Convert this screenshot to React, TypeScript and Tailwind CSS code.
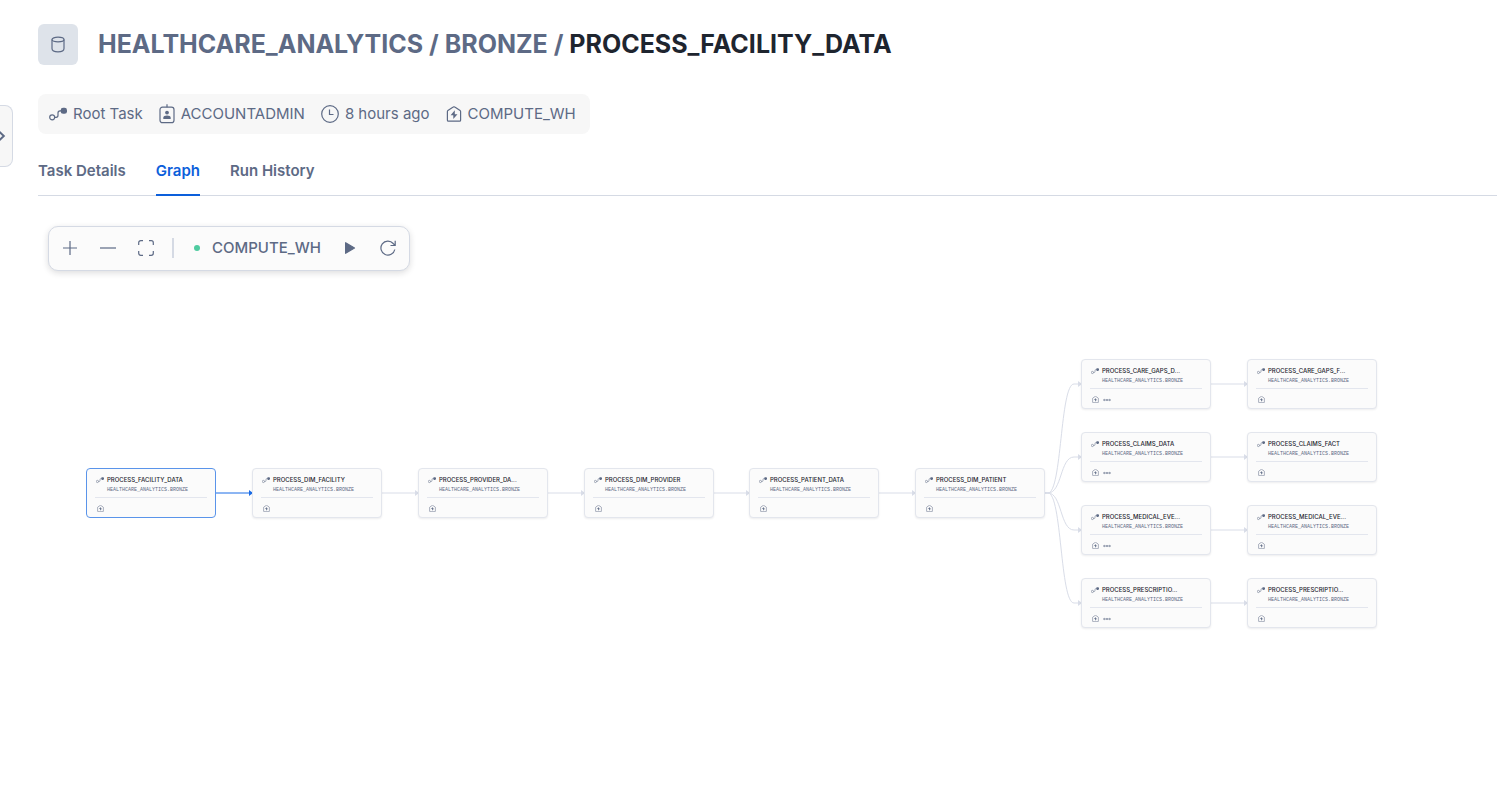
import React from 'react';

type IconProps = { className?: string };

function TaskIcon({ className }: IconProps) {
  return (
    <svg viewBox="0 0 18 18" fill="none" stroke="currentColor" strokeWidth="1.200" className={className} aria-hidden="true">
      <circle cx="3.200" cy="12.300" r="2.500" />
      <path d="M5.700 12.300h1.500c1.400 0 1.800-.8 1.800-2V8c0-1.300.6-2.200 2-2.200h1" />
      <rect x="11.700" y="2.800" width="6.300" height="6" rx="2.400" fill="currentColor" stroke="none" />
    </svg>
  );
}

function BadgeIcon({ className }: IconProps) {
  return (
    <svg viewBox="0 0 16 20" fill="none" stroke="currentColor" strokeWidth="1.200" className={className} aria-hidden="true">
      <rect x="1" y="3.200" width="14" height="15.500" rx="2.500" />
      <path d="M8 .3v3" />
      <circle cx="8" cy="8.600" r="1.900" fill="currentColor" stroke="none" />
      <path d="M4.300 15v-1.200c0-1.500 1.500-2.300 3.700-2.300s3.700.8 3.700 2.300V15z" fill="currentColor" stroke="none" />
    </svg>
  );
}

function ClockIcon({ className }: IconProps) {
  return (
    <svg viewBox="0 0 18 18" fill="none" stroke="currentColor" strokeWidth="1.200" className={className} aria-hidden="true">
      <circle cx="9" cy="9" r="8.300" />
      <path d="M8.500 4.500v5h4" />
    </svg>
  );
}

function WarehouseIcon({ className }: IconProps) {
  return (
    <svg viewBox="0 0 16 16" fill="none" stroke="currentColor" strokeWidth="1.200" className={className} aria-hidden="true">
      <path d="M2.400 15.200h11.200c.6 0 1-.4 1-1V5.600c0-.4-.2-.8-.5-1L8.800 1.100a1.400 1.400 0 0 0-1.600 0L1.900 4.600c-.3.200-.5.600-.5 1v8.600c0 .6.400 1 1 1z" />
      <path d="M8.800 4.300 4.600 9.200h2.700v3.900l4.200-4.900H8.800z" fill="currentColor" stroke="none" />
    </svg>
  );
}

function DatabaseIcon({ className }: IconProps) {
  return (
    <svg viewBox="0 0 16 18" fill="none" stroke="currentColor" strokeWidth="1.200" className={className} aria-hidden="true">
      <ellipse cx="8" cy="3.500" rx="6" ry="2.300" />
      <path d="M2 3.500v9c0 2 1.600 3.300 6 3.300s6-1.300 6-3.300v-9" />
    </svg>
  );
}

const icons = {
  plus: <path d="M8 1v14M1 8h14" />,
  minus: <path d="M0 8h16" />,
  expand: <path d="M.7 5V2.700a2 2 0 0 1 2-2H5M11 .7h2.300a2 2 0 0 1 2 2V5M15.300 11v2.300a2 2 0 0 1-2 2H11M5 15.300H2.700a2 2 0 0 1-2-2V11" />,
  play: <path d="M3.600 2.700v10.600L12.500 8z" fill="currentColor" strokeLinejoin="round" />,
  refresh: <path d="M14.800 9.500A7 7 0 1 1 13.200 3.500L15 5.300M15.200.8v4.700h-4.700" />,
};

function ToolButton({ label, icon }: { label: string; icon: React.ReactNode }) {
  return (
    <button type="button" aria-label={label} className="flex size-[38px] items-center justify-center">
      <svg viewBox="0 0 16 16" fill="none" stroke="currentColor" strokeWidth="1.200" className="size-4 overflow-visible">
        {icon}
      </svg>
    </button>
  );
}

type TaskNode = { title: string; x: number; y: number; active?: boolean; more?: boolean };

const nodes: TaskNode[] = [
  { title: 'PROCESS_FACILITY_DATA', x: 48, y: 272, active: true },
  { title: 'PROCESS_DIM_FACILITY', x: 214, y: 272 },
  { title: 'PROCESS_PROVIDER_DATA', x: 380, y: 272 },
  { title: 'PROCESS_DIM_PROVIDER', x: 546, y: 272 },
  { title: 'PROCESS_PATIENT_DATA', x: 711, y: 272 },
  { title: 'PROCESS_DIM_PATIENT', x: 877, y: 272 },
  { title: 'PROCESS_CARE_GAPS_DATA', x: 1043, y: 163, more: true },
  { title: 'PROCESS_CLAIMS_DATA', x: 1043, y: 236, more: true },
  { title: 'PROCESS_MEDICAL_EVENTS', x: 1043, y: 309, more: true },
  { title: 'PROCESS_PRESCRIPTIONS', x: 1043, y: 382, more: true },
  { title: 'PROCESS_CARE_GAPS_FACT', x: 1209, y: 163 },
  { title: 'PROCESS_CLAIMS_FACT', x: 1209, y: 236 },
  { title: 'PROCESS_MEDICAL_EVENTS_FACT', x: 1209, y: 309 },
  { title: 'PROCESS_PRESCRIPTIONS_FACT', x: 1209, y: 382 },
];

const shortTitles: Record<string, string> = {
  PROCESS_PROVIDER_DATA: 'PROCESS_PROVIDER_DA...',
  PROCESS_CARE_GAPS_DATA: 'PROCESS_CARE_GAPS_D...',
  PROCESS_CARE_GAPS_FACT: 'PROCESS_CARE_GAPS_F...',
  PROCESS_MEDICAL_EVENTS: 'PROCESS_MEDICAL_EVE...',
  PROCESS_MEDICAL_EVENTS_FACT: 'PROCESS_MEDICAL_EVE...',
  PROCESS_PRESCRIPTIONS: 'PROCESS_PRESCRIPTIO...',
  PROCESS_PRESCRIPTIONS_FACT: 'PROCESS_PRESCRIPTIO...',
};

const edges = [
  ...[214, 380, 546, 711, 877].map((x, i) => ({ d: `M${x - 36} 297H${x}`, x, y: 297, active: i === 0 })),
  ...[188, 261, 334, 407].map((y) => ({
    d: `M1007 297H1010C1024 297 1022 ${y} 1036 ${y}H1043`,
    x: 1043,
    y,
    active: false,
  })),
  ...[188, 261, 334, 407].map((y) => ({ d: `M1173 ${y}H1209`, x: 1209, y, active: false })),
];

function NodeCard({ node }: { node: TaskNode }) {
  return (
    <article
      className={`absolute h-[50px] w-[130px] rounded-[4px] border bg-[#fbfbfb] px-2 pt-[7px] text-[#5d6a85] ${
        node.active ? 'border-[#5a94ea]' : 'border-[#e3e6ed] shadow-[0_1px_2px_rgba(25,30,36,0.08)]'
      }`}
      style={{ left: node.x, top: node.y }}
    >
      <div className="flex gap-[3px] pl-px">
        <TaskIcon className="size-2" />
        <div>
          <h2 className="text-[6px] leading-[7px] font-medium whitespace-nowrap text-[#1e252f]">
            {shortTitles[node.title] ?? node.title}
          </h2>
          <p className="mt-1 font-['Liberation_Mono',monospace] text-[5px] leading-[7px] whitespace-nowrap">
            HEALTHCARE_ANALYTICS.BRONZE
          </p>
        </div>
      </div>
      <div className="mt-[3px] flex items-center gap-1 border-t border-[#e3e6ee] pt-[7px] pl-[2px]">
        <WarehouseIcon className="size-[7px]" />
        {node.more && (
          <svg viewBox="0 0 8 4" fill="none" stroke="currentColor" strokeWidth=".5" className="h-1 w-2" aria-hidden="true">
            <circle cx="1.300" cy="2" r=".7" />
            <circle cx="4" cy="2" r=".7" />
            <circle cx="6.700" cy="2" r=".7" />
            <path d="M.5 2h7" />
          </svg>
        )}
      </div>
    </article>
  );
}

function MetaItem({ icon, children }: { icon: React.ReactNode; children: React.ReactNode }) {
  return (
    <li className="flex items-center gap-[6px]">
      {icon}
      <span>{children}</span>
    </li>
  );
}

export default function App() {
  return (
    <div className="relative flex min-h-screen flex-col overflow-hidden bg-white pl-[38px] font-['Inter',sans-serif] text-[#5d6a85]">
      <button
        type="button"
        aria-label="Open sidebar"
        className="absolute top-[105px] left-0 flex h-[62px] w-[13px] items-center rounded-r-lg border border-l-0 border-[#d5dae4] bg-[#f7f7f7]"
      >
        <svg viewBox="0 0 6 12" fill="none" stroke="currentColor" strokeWidth="2" className="h-3 w-[6px]">
          <path d="M-1 1.500 3.800 6-1 10.500" />
        </svg>
      </button>

      <header className="pt-6">
        <div className="flex items-center gap-5">
          <div className="flex h-[41px] w-10 items-center justify-center rounded-md bg-[#dee3ea]">
            <DatabaseIcon className="h-[18px] w-4" />
          </div>
          <h1 className="text-[25px] leading-[41px] font-bold whitespace-nowrap">
            HEALTHCARE_ANALYTICS / BRONZE / <span className="text-[#1e252f]">PROCESS_FACILITY_DATA</span>
          </h1>
        </div>
        <ul className="mt-[29px] flex h-10 w-fit items-center gap-4 rounded-lg bg-[#f7f7f7] pr-[14px] pl-[11px] text-[15px] whitespace-nowrap">
          <MetaItem icon={<TaskIcon className="size-[18px]" />}>Root Task</MetaItem>
          <MetaItem icon={<BadgeIcon className="h-5 w-4" />}>ACCOUNTADMIN</MetaItem>
          <MetaItem icon={<ClockIcon className="size-[18px]" />}>8 hours ago</MetaItem>
          <MetaItem icon={<WarehouseIcon className="size-4" />}>COMPUTE_WH</MetaItem>
        </ul>
      </header>

      <nav className="mt-6 flex h-[38px] gap-[30px] border-b border-[#d5dae4] text-[15px] leading-[26px] font-semibold">
        <a href="#details">Task Details</a>
        <a href="#graph" aria-current="page" className="h-[38px] border-b-2 border-[#0c5fdb] text-[#0c5fdb]">
          Graph
        </a>
        <a href="#history">Run History</a>
      </nav>

      <main className="relative flex-1">
        <svg className="absolute inset-0 size-full" fill="none" aria-hidden="true">
          {edges.map((e) => (
            <g key={e.d} className={e.active ? 'text-[#1a6ce7]' : 'text-[#d9dde8]'}>
              <path d={e.d} stroke="currentColor" />
              <path d={`M${e.x - 3} ${e.y - 3}L${e.x + 1} ${e.y}L${e.x - 3} ${e.y + 3}z`} fill="currentColor" />
            </g>
          ))}
        </svg>
        {nodes.map((n) => (
          <NodeCard key={n.title} node={n} />
        ))}
        <div
          role="toolbar"
          aria-label="Graph controls"
          className="absolute top-[30px] left-[10px] flex h-[45px] items-center rounded-[10px] border border-[#d5dae4] bg-[#fbfbfb] px-[2px] pb-px shadow-[0_2px_6px_rgba(25,30,36,0.15)]"
        >
          <ToolButton label="Zoom in" icon={icons.plus} />
          <ToolButton label="Zoom out" icon={icons.minus} />
          <ToolButton label="Fit to screen" icon={icons.expand} />
          <span className="mr-5 ml-[7px] h-5 w-[2px] bg-[#d5dae4]" />
          <button type="button" className="flex items-center gap-3 pr-[10px] text-[15px] font-medium">
            <span className="size-[6px] rounded-full bg-[#4fcba0]" />
            COMPUTE_WH
          </button>
          <ToolButton label="Run" icon={icons.play} />
          <ToolButton label="Refresh" icon={icons.refresh} />
        </div>
      </main>
    </div>
  );
}
